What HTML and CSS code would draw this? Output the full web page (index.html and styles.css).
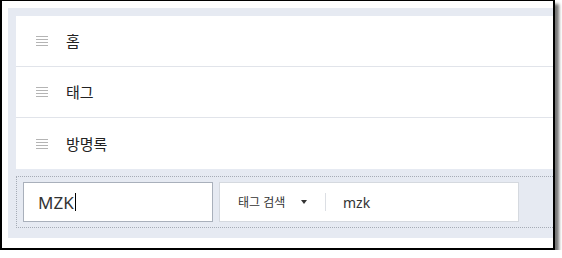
FILE: index.html
```html
<!DOCTYPE html>
<html lang="ko">
<head>
  <meta charset="UTF-8" />
  <title>메뉴 설정</title>
  <link rel="stylesheet" href="styles.css">
</head>
<body>
  <div class="frame">
    <div class="menu-editor">
      <ul class="menu-list">
        <li class="menu-item"><span class="handle"></span><span class="label">홈</span></li>
        <li class="menu-item"><span class="handle"></span><span class="label">태그</span></li>
        <li class="menu-item"><span class="handle"></span><span class="label">방명록</span></li>
      </ul>

      <!-- new menu entry -->
      <div class="add-row">
        <div class="name-input">MZK<span class="caret"></span></div>
        <div class="link-input">
          <div class="type-select">태그 검색 <span class="arrow"></span></div>
          <div class="value">mzk</div>
        </div>
      </div>
    </div>
  </div>
</body>
</html>
```

FILE: styles.css
```css
body {
  margin: 0;
  background: #fff;
  font-family: "Noto Sans", "Noto Sans CJK KR", sans-serif;
}
.frame {
  width: 545px;
  height: 230px;
  border-style: solid;
  border-color: #000;
  border-width: 1px 2px 2px 2px;
  padding: 7px 0 10px 6px;
  background: #fff;
  box-shadow: 4px 4px 3px rgba(0, 0, 0, 0.55);
}
.menu-editor {
  background: #e6eaf2;
  padding: 8px 0 10px 8px;
}
.menu-list {
  list-style: none;
  margin: 0;
  padding: 0;
  background: #fff;
}
.menu-item {
  height: 50px;
  border-bottom: 1px solid #e1e4ea;
  display: flex;
  align-items: center;
  padding-left: 20px;
  gap: 18px;
}
.menu-item:last-child {
  border-bottom: none;
  height: 51px;
}
.handle {
  width: 12px;
  height: 10px;
  background: repeating-linear-gradient(to bottom, #b4b4b4 0 1px, transparent 1px 3px);
}
.label {
  font-size: 15px;
  color: #222;
  margin-top: -1px;
}
.add-row {
  margin-top: 7px;
  border: 1px dotted #a6acb6;
  border-right: none;
  padding: 5px 6px;
  display: flex;
  gap: 6px;
}
.name-input {
  width: 174px;
  height: 38px;
  border: 1px solid #a9b0bb;
  background: #fff;
  padding-left: 14px;
  display: flex;
  align-items: center;
  font-size: 17px;
  color: #333;
}
.caret {
  width: 1px;
  height: 18px;
  background: #000;
  margin-left: 1px;
}
.link-input {
  width: 298px;
  height: 38px;
  border: 1px solid #d5d9df;
  background: #fff;
  display: flex;
  align-items: center;
}
.type-select {
  width: 87px;
  padding-left: 18px;
  font-size: 12px;
  color: #333;
  display: flex;
  align-items: center;
  border-right: 1px solid #dcdfe4;
  height: 18px;
}
.arrow {
  margin-left: 16px;
  width: 0;
  height: 0;
  border-left: 3.5px solid transparent;
  border-right: 3.5px solid transparent;
  border-top: 4px solid #333;
}
.value {
  padding-left: 17px;
  font-size: 14px;
  color: #333;
}
```
